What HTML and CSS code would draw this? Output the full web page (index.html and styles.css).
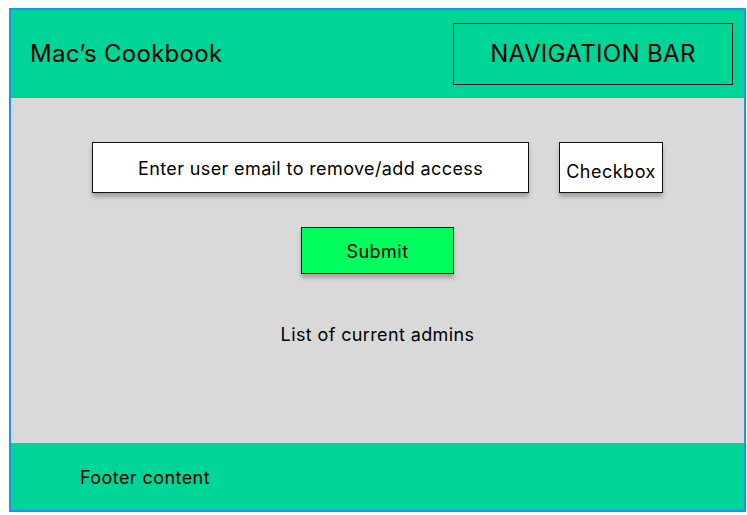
FILE: index.html
```html
<!DOCTYPE html>
<html>
<head>
<meta charset="utf-8">
<link rel="stylesheet" href="styles.css">
</head>
<body>
<div class="frame">
  <header class="header">
    <div class="title">Mac’s Cookbook</div>
    <nav class="nav">NAVIGATION BAR</nav>
  </header>
  <main class="main">
    <div class="row">
      <div class="email">Enter user email to remove/add access</div>
      <div class="check">Checkbox</div>
    </div>
    <div class="submit">Submit</div>
    <div class="list">List of current admins</div>
  </main>
  <footer class="footer">Footer content</footer>
</div>
</body>
</html>
```
FILE: styles.css
```css
html, body {
  margin: 0;
  padding: 0;
  background: #ffffff;
}
body {
  font-family: Inter, "Noto Sans", sans-serif;
  color: #000;
  letter-spacing: 0.38px;
}
.frame {
  margin: 8px 0 0 9px;
  width: 733px;
  height: 500px;
  border: 2px solid #1d93f5;
  display: flex;
  flex-direction: column;
}
.header {
  height: 88px;
  background: #00d598;
  display: flex;
  align-items: center;
  justify-content: space-between;
  padding: 0 11px 0 19px;
  box-sizing: border-box;
}
.title {
  font-size: 24px;
  letter-spacing: 0.3px;
  padding-bottom: 2px;
}
.nav {
  width: 280px;
  height: 62px;
  box-sizing: border-box;
  border: 1px solid #1a1a1a;
  display: flex;
  align-items: center;
  justify-content: center;
  font-size: 24px;
  letter-spacing: 0.35px;
  padding-bottom: 2px;
}
.main {
  flex: 1;
  background: #d9d9d9;
  display: flex;
  flex-direction: column;
  align-items: center;
  padding-top: 44px;
  box-sizing: border-box;
}
.row {
  display: flex;
  gap: 30px;
}
.email, .check, .submit {
  box-sizing: border-box;
  border: 1px solid #111;
  box-shadow: 0 4px 4px rgba(0, 0, 0, 0.25);
  display: flex;
  align-items: center;
  justify-content: center;
  font-size: 18px;
}
.email {
  width: 437px;
  height: 51px;
  background: #fff;
  padding-top: 2px;
}
.check {
  width: 104px;
  height: 51px;
  background: #fff;
  padding-top: 7px;
  letter-spacing: 0.5px;
}
.submit {
  margin-top: 34px;
  width: 153px;
  height: 47px;
  background: #00ff5e;
  padding-top: 1px;
  letter-spacing: 0.5px;
}
.list {
  margin-top: 50px;
  font-size: 18px;
  line-height: 22px;
}
.footer {
  height: 67px;
  background: #00d598;
  display: flex;
  align-items: center;
  padding-left: 69px;
  font-size: 18px;
  letter-spacing: 0.43px;
  padding-top: 1px;
  box-sizing: border-box;
}
```
